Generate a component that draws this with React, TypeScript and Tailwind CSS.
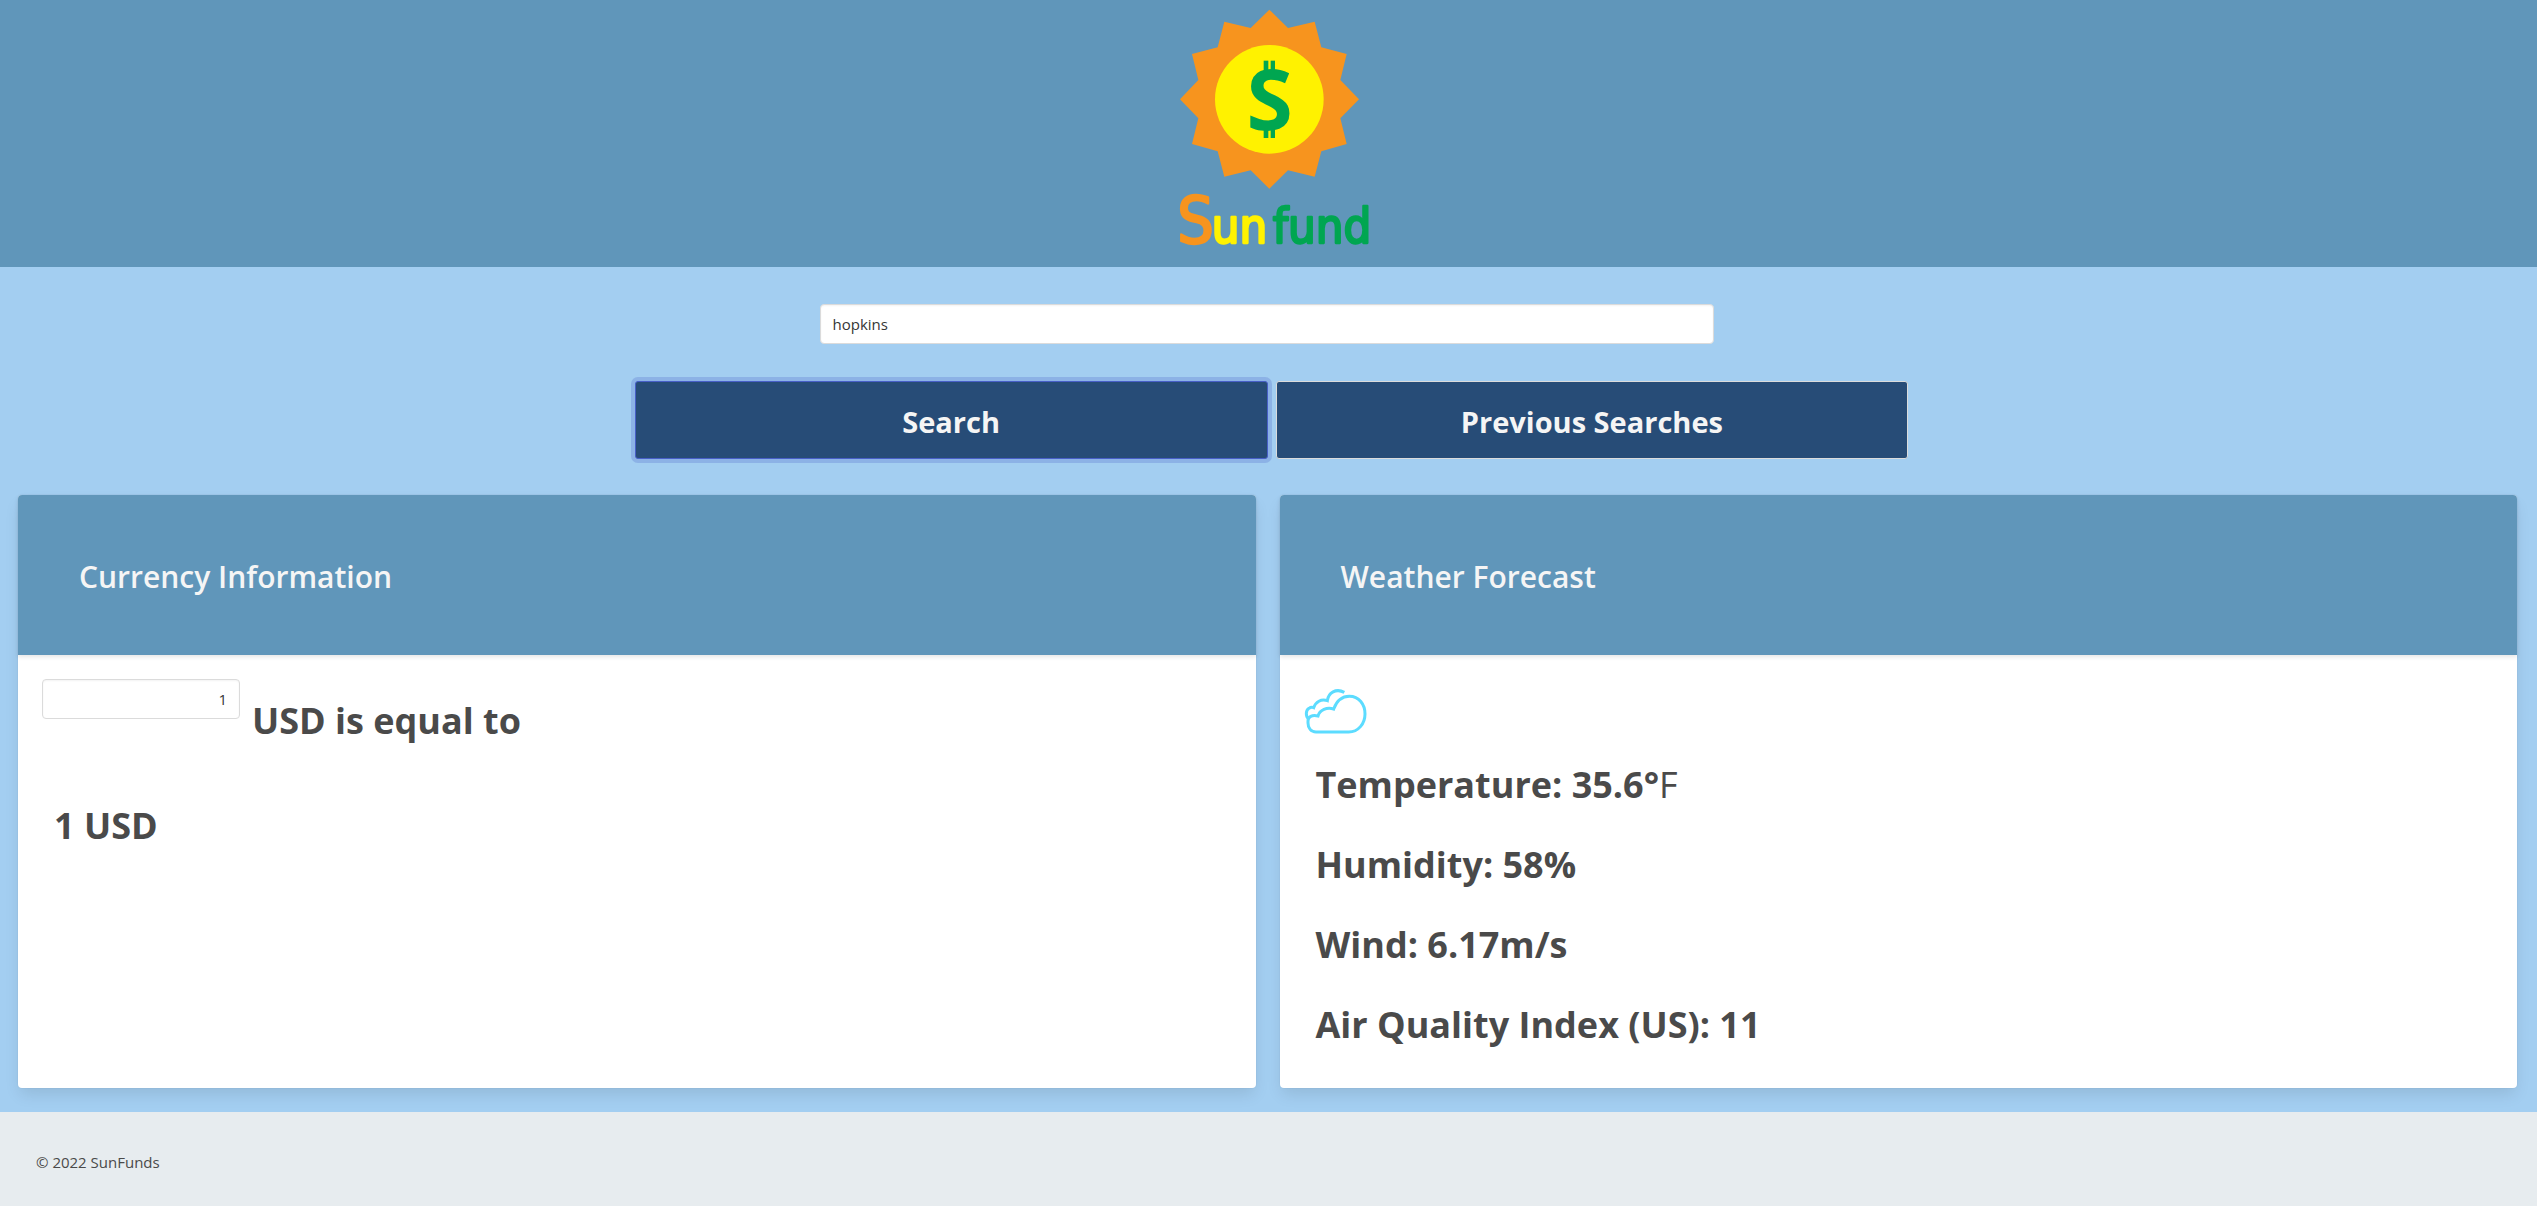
import { useState } from "react";
import type { ReactNode } from "react";

function Logo() {
  return (
    <svg
      viewBox="0 0 690 801"
      role="img"
      aria-label="SunFund"
      className="h-[267px] w-[230px] font-['DejaVu_Sans_Condensed',sans-serif]"
    >
      <polygon
        fill="#f7941e"
        points="328,29 384,84 464,65 484,142 560,162 541,240 597,298 541,355 560,432 484,454 464,530 384,511 328,566 272,511 193,530 173,454 96,432 115,355 60,298 115,240 96,162 173,142 193,65 272,84"
      />
      <circle cx="328" cy="298" r="163" fill="#fff200" />
      <g fill="#00a651">
        <rect x="311" y="182" width="14" height="36" />
        <rect x="332" y="182" width="13" height="36" />
        <rect x="311" y="380" width="14" height="34" />
        <rect x="332" y="380" width="13" height="34" />
        <text x="329" y="389" fontSize="252" textAnchor="middle" className="font-['Open_Sans',sans-serif] font-bold">
          S
        </text>
      </g>
      <g strokeWidth="7" strokeLinejoin="round">
        <text x="52" y="729" fontSize="192" fill="#f7941e" stroke="#f7941e">S</text>
        <text x="155" y="729" fontSize="146" fill="#fff200" stroke="#fff200">un</text>
        <text x="338" y="729" fontSize="146" fill="#00a651" stroke="#00a651">fund</text>
      </g>
    </svg>
  );
}

function CloudIcon() {
  return (
    <svg
      viewBox="9 -4 192 180"
      aria-hidden="true"
      className="h-[60px] w-16"
      fill="none"
      stroke="#5cdcff"
      strokeWidth="9"
    >
      <path d="M45 155C30 155 21 143 21 128V122C21 110 33 102 51 107C56 89 78 79 98 86C107 62 124 48 145 48C174 48 192 72 192 101C192 130 172 155 143 155Z" />
      <path d="M23 116C13 108 14 90 24 84C28 81 33 80 38 82C44 65 60 55 79 61C82 37 105 23 130 36" />
    </svg>
  );
}

function Card({ title, children }: { title: string; children: ReactNode }) {
  return (
    <section className="flex flex-col rounded bg-white shadow-[0_8px_16px_-2px_rgba(10,10,10,0.1),0_0_0_1px_rgba(10,10,10,0.02)]">
      <header className="flex h-40 items-center rounded-t bg-[#6096ba] px-[61px] pt-1 shadow-[0_2px_4px_rgba(10,10,10,0.1)]">
        <h2 className="text-[30px] leading-10 font-semibold text-[#f5f5f5]">{title}</h2>
      </header>
      <div className="flex-1 p-6">{children}</div>
    </section>
  );
}

const inputStyle =
  "h-10 rounded border border-[#dbdbdb] bg-white px-3 text-[15px] text-[#363636] shadow-[inset_0_1px_2px_rgba(10,10,10,0.05)] outline-none";
const buttonStyle =
  "h-[78px] w-1/4 rounded-[3px] border bg-[#274c77] pt-1 text-[29px] font-bold text-[#f5f5f5]";

const forecast = ["Humidity: 58%", "Wind: 6.17m/s", "Air Quality Index (US): 11"];

export default function App() {
  const [city, setCity] = useState("hopkins");
  const [amount, setAmount] = useState("1");

  return (
    <div className="bg-white pr-px font-['Open_Sans',sans-serif] text-[#4a4a4a]">
      <div className="flex min-h-screen flex-col bg-[#a3cef1]">
        <header className="flex justify-center bg-[#6096ba] pl-3">
          <Logo />
        </header>

        <main className="flex-1 pb-6">
          <form onSubmit={(e) => e.preventDefault()}>
            <div className="flex justify-center pt-[37px] pr-1">
              <input
                aria-label="City"
                type="text"
                value={city}
                onChange={(e) => setCity(e.target.value)}
                className={`${inputStyle} w-[894px] max-w-full`}
              />
            </div>
            <div className="mt-[37px] flex justify-center gap-2 pl-1.5">
              <button
                type="submit"
                className={`${buttonStyle} border-[#485fc7] shadow-[0_0_0_4px_rgba(72,95,199,0.25)]`}
              >
                Search
              </button>
              <button type="button" className={`${buttonStyle} border-[#dbdbdb]`}>
                Previous Searches
              </button>
            </div>
          </form>

          <div className="mt-9 grid grid-cols-2 gap-6 pr-5 pl-[18px]">
            <Card title="Currency Information">
              <div className="flex">
                <input
                  aria-label="Amount in USD"
                  type="text"
                  inputMode="numeric"
                  value={amount}
                  onChange={(e) => setAmount(e.target.value)}
                  className={`${inputStyle} w-[198px] text-right`}
                />
                <p className="mt-[15px] ml-3 text-4xl leading-[54px] font-bold">USD is equal to</p>
              </div>
              <p className="mt-[51px] ml-3 text-4xl leading-[54px] font-bold">1 USD</p>
            </Card>

            <Card title="Weather Forecast">
              <CloudIcon />
              <div className="mt-[19px] mb-3 ml-3 flex flex-col gap-[26px] text-4xl leading-[54px] font-bold">
                <p>
                  Temperature: 35.6°<span className="font-normal">F</span>
                </p>
                {forecast.map((line) => (
                  <p key={line}>{line}</p>
                ))}
              </div>
            </Card>
          </div>
        </main>

        <footer className="bg-[#e7ecef] px-9 pt-[37px] pb-[31px]">
          <p className="text-[15px] leading-[26px]">© 2022 SunFunds</p>
        </footer>
      </div>
    </div>
  );
}
